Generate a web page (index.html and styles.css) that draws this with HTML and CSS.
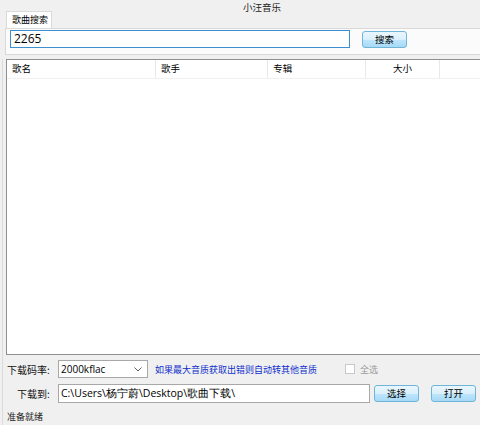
FILE: index.html
```html
<!DOCTYPE html>
<html lang="zh">
<head>
<meta charset="utf-8">
<title>小汪音乐</title>
<link rel="stylesheet" href="styles.css">
</head>
<body>
<div class="window">
  <div class="title">小汪音乐</div>
  <div class="tabs">
    <div class="tab">歌曲搜索</div>
  </div>
  <div class="panel">
    <div class="search-input">2265</div>
    <div class="btn btn-search">搜索</div>
  </div>
  <div class="body">
    <div class="list">
      <div class="list-head">
        <div class="col c1">歌名</div>
        <div class="col c2">歌手</div>
        <div class="col c3">专辑</div>
        <div class="col c4">大小</div>
        <div class="col c5"></div>
      </div>
    </div>
    <div class="row row-rate">
      <div class="label">下载码率:</div>
      <div class="combo">
        <span>2000kflac</span>
        <svg class="arrow" width="8" height="5" viewBox="0 0 8 5"><path d="M0.5 0.5 L4 4 L7.5 0.5" fill="none" stroke="#606060" stroke-width="1"/></svg>
      </div>
      <div class="hint">如果最大音质获取出错则自动转其他音质</div>
      <div class="check"><span class="box"></span><span class="check-label">全选</span></div>
    </div>
    <div class="row row-path">
      <div class="label label2">下载到:</div>
      <div class="path-input">C:\Users\杨宁蔚\Desktop\歌曲下载\</div>
      <div class="btn btn-choose">选择</div>
      <div class="btn btn-open">打开</div>
    </div>
    <div class="status">准备就绪</div>
  </div>
</div>
</body>
</html>
```
FILE: styles.css
```css
html, body {
  margin: 0;
  padding: 0;
}
body {
  width: 480px;
  height: 425px;
  overflow: hidden;
  background: #f0f0f0;
  font-family: "Noto Sans CJK SC", "Noto Sans", sans-serif;
  font-size: 10px;
  color: #000;
}
.window {
  display: flex;
  flex-direction: column;
  height: 425px;
}
.title {
  height: 11px;
  line-height: 15px;
  text-align: center;
  padding-left: 44px;
  font-size: 9.5px;
  color: #222;
}
.tabs {
  display: flex;
  padding-left: 6px;
  height: 17px;
}
.tab {
  width: 46px;
  height: 17px;
  box-sizing: border-box;
  background: #ffffff;
  border: 1px solid #d9d9d9;
  border-bottom: none;
  line-height: 16px;
  padding-left: 5px;
  font-size: 9px;
  white-space: nowrap;
  position: relative;
  z-index: 1;
  margin-bottom: -1px;
}
.panel {
  margin-left: 5px;
  height: 27px;
  box-sizing: border-box;
  background: #fbfbfb;
  border-top: 1px solid #d9d9d9;
  border-left: 1px solid #d9d9d9;
  border-bottom: 1px solid #d9d9d9;
  display: flex;
  align-items: flex-start;
  padding-top: 1px;
  padding-left: 4px;
}
.search-input {
  width: 340px;
  height: 18px;
  box-sizing: border-box;
  background: #fff;
  border: 1px solid #3c8fd0;
  font-family: "Open Sans", "Noto Sans", sans-serif;
  font-size: 12px;
  line-height: 16px;
  padding-left: 3px;
}
.btn {
  width: 45px;
  height: 17px;
  box-sizing: border-box;
  border: 1px solid #6fb5d8;
  border-radius: 3px;
  background: linear-gradient(to bottom, #eaf6fd 0%, #d9f0fc 50%, #bee6fd 51%, #a7d9f5 100%);
  text-align: center;
  line-height: 15px;
  font-size: 9.5px;
}
.btn-search {
  margin-left: 12px;
  margin-top: 1px;
}
.body {
  flex: 1;
  display: flex;
  flex-direction: column;
  border-left: 1px solid #dcdcdc;
  margin-left: 2px;
  margin-top: 4px;
}
.list {
  margin-left: 3px;
  height: 296px;
  box-sizing: border-box;
  background: #fff;
  border: 1px solid #8f8f8f;
  border-right: none;
}
.list-head {
  display: flex;
  height: 18px;
  border-bottom: 1px solid #f0f0f0;
}
.col {
  box-sizing: border-box;
  height: 18px;
  line-height: 17px;
  padding-left: 5px;
  border-right: 1px solid #e8e8e8;
  font-size: 9.5px;
}
.c1 { width: 150px; }
.c2 { width: 113px; }
.c3 { width: 98px; }
.c4 { width: 75px; text-align: center; padding-left: 0; }
.c5 { width: 40px; border-right: none; }
.row {
  display: flex;
  align-items: center;
}
.row-rate {
  margin-top: 5px;
  height: 18px;
}
.label {
  width: 51px;
  padding-left: 4px;
  font-size: 10px;
  color: #111;
  white-space: nowrap;
}
.label2 {
  padding-left: 14px;
  width: 41px;
}
.combo {
  width: 90px;
  height: 18px;
  box-sizing: border-box;
  background: #fff;
  border: 1px solid #a8a8a8;
  display: flex;
  align-items: center;
  justify-content: space-between;
  padding: 0 5px 0 2px;
  font-family: "Open Sans", "Noto Sans", sans-serif;
  font-size: 10px;
}
.hint {
  margin-left: 7px;
  color: #0f2fcc;
  font-size: 9px;
  width: 190px;
  white-space: nowrap;
}
.check {
  display: flex;
  align-items: center;
  color: #9a9a9a;
  font-size: 9px;
}
.box {
  width: 10px;
  height: 10px;
  box-sizing: border-box;
  border: 1px solid #c8c8c8;
  background: #fff;
  margin-right: 5px;
}
.row-path {
  margin-top: 6px;
  height: 19px;
}
.path-input {
  width: 312px;
  height: 19px;
  box-sizing: border-box;
  background: #fff;
  border: 1px solid #a8a8a8;
  font-family: "Open Sans", "Noto Sans", sans-serif;
  font-size: 10.5px;
  line-height: 17px;
  padding-left: 2px;
  white-space: nowrap;
}
.btn-choose {
  margin-left: 4px;
}
.btn-open {
  margin-left: 12px;
}
.status {
  margin-top: 7px;
  padding-left: 4px;
  font-size: 9px;
  color: #222;
}
```
